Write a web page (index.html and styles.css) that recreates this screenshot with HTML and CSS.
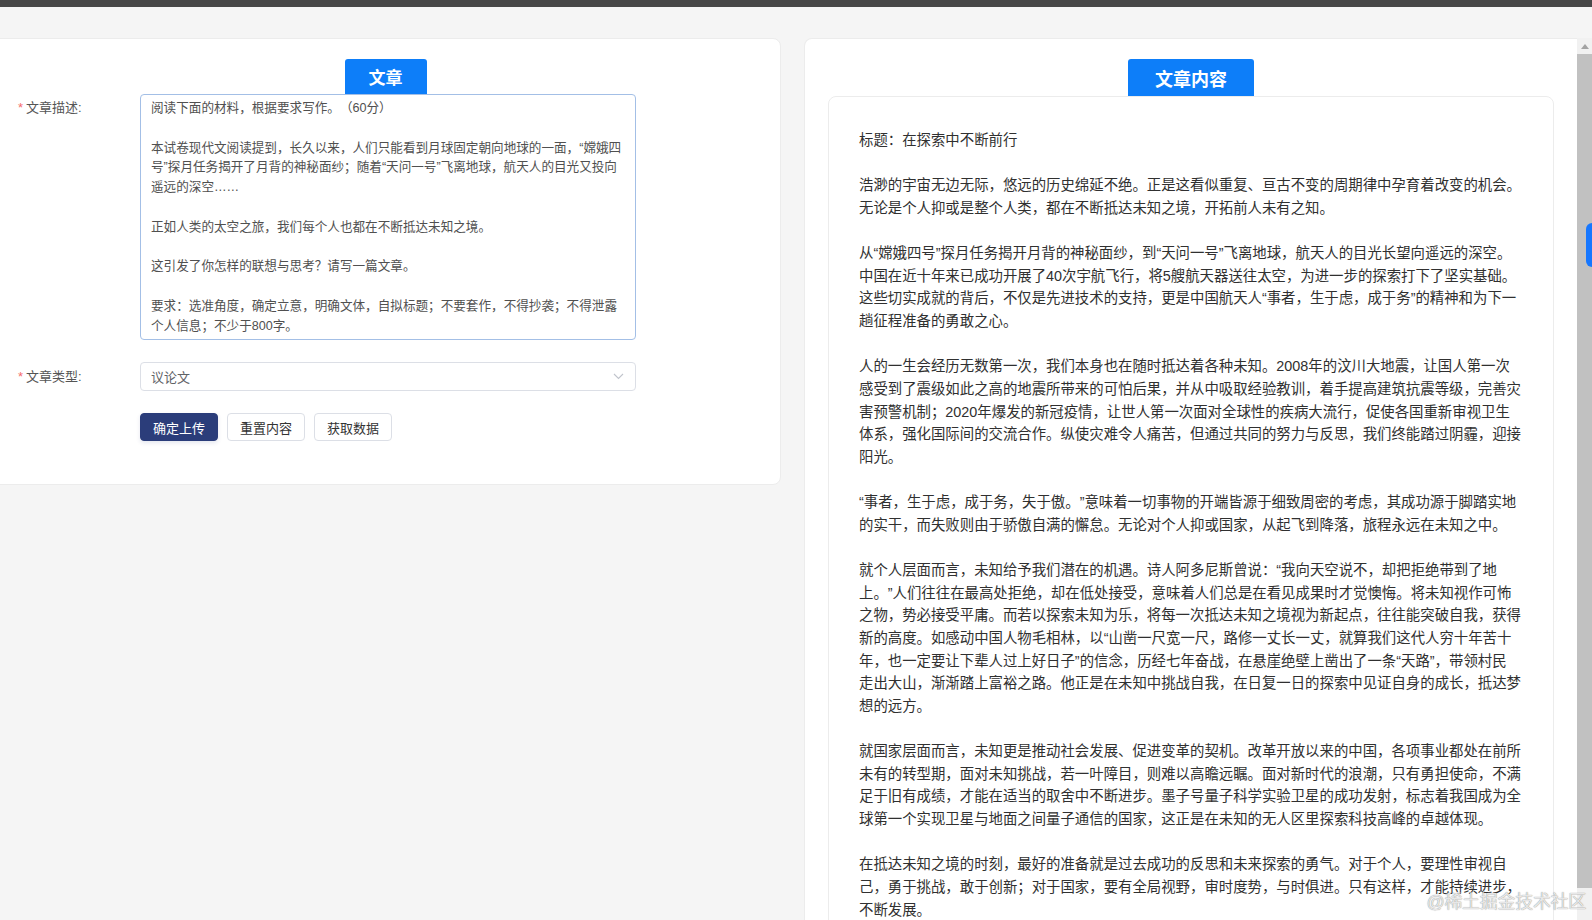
FILE: index.html
```html
<!DOCTYPE html>
<html lang="zh-CN">
<head>
    <meta charset="UTF-8">
    <meta name="viewport" content="width=device-width, initial-scale=1.0">
    <title>文章生成</title>
    <link rel="stylesheet" href="styles.css">
</head>
<body>
    <div class="topbar"></div>

    <div class="page">
        <!-- 左侧：题目表单 -->
        <div class="card card-left">
            <div class="tab-row">
                <span class="tab-title tab-small">文章</span>
            </div>
            <form class="essay-form">
                <div class="form-item">
                    <label class="form-label"><span class="required">*</span>文章描述:</label>
                    <textarea class="form-textarea">阅读下面的材料，根据要求写作。（60分）

本试卷现代文阅读提到，长久以来，人们只能看到月球固定朝向地球的一面，“嫦娥四号”探月任务揭开了月背的神秘面纱；随着“天问一号”飞离地球，航天人的目光又投向遥远的深空……

正如人类的太空之旅，我们每个人也都在不断抵达未知之境。

这引发了你怎样的联想与思考？请写一篇文章。

要求：选准角度，确定立意，明确文体，自拟标题；不要套作，不得抄袭；不得泄露个人信息；不少于800字。</textarea>
                </div>
                <div class="form-item form-item-center">
                    <label class="form-label"><span class="required">*</span>文章类型:</label>
                    <div class="form-select">
                        <span>议论文</span>
                        <svg class="select-arrow" width="11" height="7" viewBox="0 0 11 7">
                            <path d="M1 1 L5.5 5.5 L10 1" fill="none" stroke="#c0c4cc" stroke-width="1.1"/>
                        </svg>
                    </div>
                </div>
                <div class="form-item form-actions">
                    <button type="button" class="btn btn-primary">确定上传</button>
                    <button type="button" class="btn">重置内容</button>
                    <button type="button" class="btn">获取数据</button>
                </div>
            </form>
        </div>

        <!-- 右侧：生成的文章 -->
        <div class="card card-right">
            <div class="tab-row tab-row-right">
                <span class="tab-title tab-large">文章内容</span>
            </div>
            <div class="article-box">
                <p>标题：在探索中不断前行</p>
                <p>浩渺的宇宙无边无际，悠远的历史绵延不绝。正是这看似重复、亘古不变的周期律中孕育着改变的机会。<br>无论是个人抑或是整个人类，都在不断抵达未知之境，开拓前人未有之知。</p>
                <p>从“嫦娥四号”探月任务揭开月背的神秘面纱，到“天问一号”飞离地球，航天人的目光长望向遥远的深空。<br>中国在近十年来已成功开展了40次宇航飞行，将5艘航天器送往太空，为进一步的探索打下了坚实基础。<br>这些切实成就的背后，不仅是先进技术的支持，更是中国航天人“事者，生于虑，成于务”的精神和为下一<br>趟征程准备的勇敢之心。</p>
                <p>人的一生会经历无数第一次，我们本身也在随时抵达着各种未知。2008年的汶川大地震，让国人第一次<br>感受到了震级如此之高的地震所带来的可怕后果，并从中吸取经验教训，着手提高建筑抗震等级，完善灾<br>害预警机制；2020年爆发的新冠疫情，让世人第一次面对全球性的疾病大流行，促使各国重新审视卫生<br>体系，强化国际间的交流合作。纵使灾难令人痛苦，但通过共同的努力与反思，我们终能踏过阴霾，迎接<br>阳光。</p>
                <p>“事者，生于虑，成于务，失于傲。”意味着一切事物的开端皆源于细致周密的考虑，其成功源于脚踏实地<br>的实干，而失败则由于骄傲自满的懈怠。无论对个人抑或国家，从起飞到降落，旅程永远在未知之中。</p>
                <p>就个人层面而言，未知给予我们潜在的机遇。诗人阿多尼斯曾说：“我向天空说不，却把拒绝带到了地<br>上。”人们往往在最高处拒绝，却在低处接受，意味着人们总是在看见成果时才觉懊悔。将未知视作可怖<br>之物，势必接受平庸。而若以探索未知为乐，将每一次抵达未知之境视为新起点，往往能突破自我，获得<br>新的高度。如感动中国人物毛相林，以“山凿一尺宽一尺，路修一丈长一丈，就算我们这代人穷十年苦十<br>年，也一定要让下辈人过上好日子”的信念，历经七年奋战，在悬崖绝壁上凿出了一条“天路”，带领村民<br>走出大山，渐渐踏上富裕之路。他正是在未知中挑战自我，在日复一日的探索中见证自身的成长，抵达梦<br>想的远方。</p>
                <p>就国家层面而言，未知更是推动社会发展、促进变革的契机。改革开放以来的中国，各项事业都处在前所<br>未有的转型期，面对未知挑战，若一叶障目，则难以高瞻远瞩。面对新时代的浪潮，只有勇担使命，不满<br>足于旧有成绩，才能在适当的取舍中不断进步。墨子号量子科学实验卫星的成功发射，标志着我国成为全<br>球第一个实现卫星与地面之间量子通信的国家，这正是在未知的无人区里探索科技高峰的卓越体现。</p>
                <p>在抵达未知之境的时刻，最好的准备就是过去成功的反思和未来探索的勇气。对于个人，要理性审视自<br>己，勇于挑战，敢于创新；对于国家，要有全局视野，审时度势，与时俱进。只有这样，才能持续进步，<br>不断发展。</p>
            </div>
        </div>

        <!-- 页面滚动条 -->
        <div class="scrollbar">
            <div class="scroll-up"></div>
            <div class="scroll-thumb"></div>
        </div>
    </div>

    <div class="side-tab"></div>
    <div class="watermark">@稀土掘金技术社区</div>
</body>
</html>
```

FILE: styles.css
```css
html, body {
    height: 100%;
}
body {
    margin: 0;
    overflow: hidden;
    background-color: #f5f5f5;
    font-family: "Liberation Sans", "Noto Sans CJK SC", sans-serif;
    color: #303133;
    text-spacing-trim: space-all;
}
.topbar {
    height: 7px;
    background-color: #474747;
}
.page {
    display: flex;
    align-items: flex-start;
    height: 913px;
    padding-top: 31px;
    box-sizing: border-box;
}
.card {
    background-color: #fff;
    border: 1px solid #ececec;
    border-radius: 8px;
    box-sizing: border-box;
}
.card-left {
    width: 791px;
    height: 447px;
    margin-left: -10px;
    padding: 20px 0 0 27px;
}
.card-right {
    flex: 1;
    align-self: stretch;
    margin-left: 23px;
    padding-top: 20px;
    overflow: hidden;
    border-bottom: none;
    border-right: none;
    border-radius: 8px 0 0 0;
}
.tab-row {
    display: flex;
    justify-content: center;
    margin-left: -27px;
}
.tab-row-right {
    margin-left: 0;
}
.tab-title {
    display: flex;
    align-items: center;
    justify-content: center;
    background-color: #0d7ef9;
    color: #fff;
    font-weight: bold;
    border-radius: 3px 3px 0 0;
}
.tab-small {
    width: 82px;
    height: 35px;
    font-size: 17px;
}
.tab-large {
    width: 126px;
    height: 37px;
    font-size: 18px;
}

/* 表单 */
.form-item {
    display: flex;
    align-items: flex-start;
}
.form-item-center {
    align-items: center;
    margin-top: 22px;
}
.form-label {
    width: 122px;
    flex-shrink: 0;
    font-size: 13px;
    line-height: 20px;
    padding-top: 4px;
    color: #555;
}
.form-item-center .form-label {
    padding-top: 0;
}
.required {
    color: #f56c6c;
    margin-right: 3px;
}
.form-textarea {
    width: 496px;
    height: 246px;
    box-sizing: border-box;
    padding: 4px 10px;
    border: 1px solid #a3bfe6;
    border-radius: 4px;
    resize: none;
    overflow: hidden;
    outline: none;
    font-family: "Liberation Sans", "Noto Sans CJK SC", sans-serif;
    font-size: 12.6px;
    line-height: 19.8px;
    color: #505050;
    background-color: #fff;
    text-spacing-trim: space-all;
}
.form-select {
    width: 496px;
    height: 29px;
    box-sizing: border-box;
    padding: 0 10px;
    border: 1px solid #dcdfe6;
    border-radius: 4px;
    display: flex;
    align-items: center;
    justify-content: space-between;
    font-size: 13px;
    color: #606266;
}
.select-arrow {
    margin-right: 1px;
}
.form-actions {
    margin-top: 22px;
    padding-left: 122px;
    gap: 9px;
}
.btn {
    width: 78px;
    height: 28px;
    padding: 0;
    border: 1px solid #dcdfe6;
    border-radius: 4px;
    background-color: #fff;
    font-family: "Liberation Sans", "Noto Sans CJK SC", sans-serif;
    font-size: 13px;
    color: #333;
}
.btn-primary {
    background-color: #2b3d7a;
    border-color: #2b3d7a;
    color: #fff;
    box-shadow: 0 2px 4px rgba(43, 61, 122, 0.12);
}

/* 文章内容 */
.article-box {
    margin: 0 23px 0 23px;
    height: 900px;
    padding: 32px 20px 0 30px;
    border: 1px solid #ececec;
    border-radius: 8px;
    font-size: 14.4px;
    line-height: 22.64px;
    color: #303030;
    white-space: nowrap;
}
.article-box p {
    margin: 0 0 22.64px 0;
}

/* 滚动条 */
.scrollbar {
    width: 15px;
    align-self: stretch;
    background-color: #f1f1f1;
    display: flex;
    flex-direction: column;
    align-items: center;
}
.scroll-up {
    width: 0;
    height: 0;
    margin: 6px 0 5px;
    border-left: 4px solid transparent;
    border-right: 4px solid transparent;
    border-bottom: 5px solid #a3a3a3;
}
.scroll-thumb {
    width: 15px;
    height: 834px;
    background-color: #c1c1c1;
}

.side-tab {
    position: absolute;
    top: 223px;
    right: 0;
    width: 6px;
    height: 44px;
    background-color: #1677ff;
    border-radius: 6px 0 0 6px;
}
.watermark {
    position: absolute;
    right: 6px;
    bottom: 7px;
    font-size: 18px;
    letter-spacing: -0.3px;
    color: rgba(238, 238, 238, 0.95);
    text-shadow: 0 0 1px rgba(0, 0, 0, 0.55);
}
```
